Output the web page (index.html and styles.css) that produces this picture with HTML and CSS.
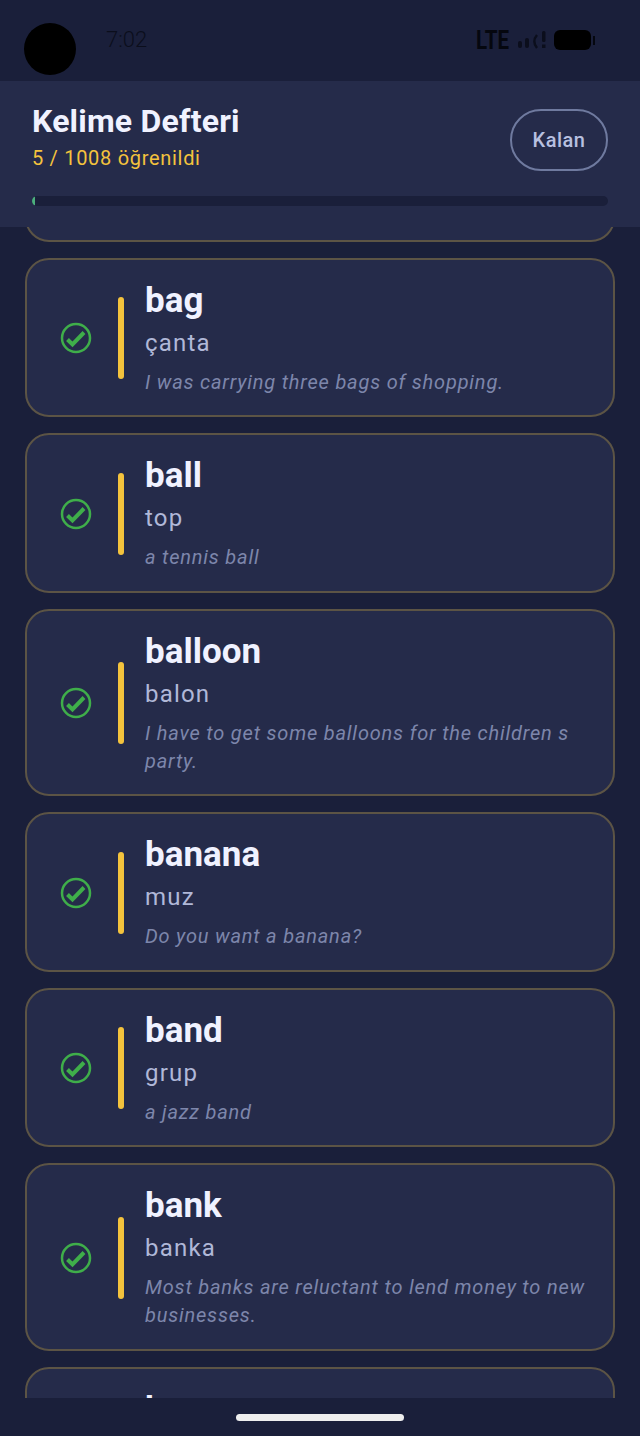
FILE: index.html
```html
<!DOCTYPE html>
<html lang="tr">

<head>
    <meta charset="UTF-8">
    <meta name="viewport" content="width=device-width, initial-scale=1.0">
    <title>Kelime Defteri</title>
    <link rel="stylesheet" href="styles.css">
</head>

<body>
    <div class="statusbar">
        <div class="camera"></div>
        <span class="time">7:02</span>
        <div class="status-icons">
            <span class="lte">LTE</span>
            <svg class="signal" width="30" height="20" viewBox="0 0 30 20">
                <rect x="1" y="11" width="4" height="7" rx="2" fill="#0b0e1c" />
                <rect x="8" y="8" width="4" height="10" rx="2" fill="#0b0e1c" />
                <path d="M20 5C16.500 9 16.500 14 20 18" stroke="#0b0e1c" stroke-width="2.500" fill="none" />
                <rect x="25" y="1" width="3.500" height="11" rx="1.500" fill="#0b0e1c" />
                <rect x="25" y="14.500" width="3.500" height="3.500" fill="#0b0e1c" />
            </svg>
            <div class="battery"></div>
            <div class="battery-tip"></div>
        </div>
    </div>

    <header class="header">
        <div class="header-top">
            <div>
                <h1>Kelime Defteri</h1>
                <p class="count">5 / 1008 öğrenildi</p>
            </div>
            <button class="filter">Kalan</button>
        </div>
        <div class="progress">
            <div class="progress-fill" style="width: 0.5%"></div>
        </div>
    </header>

    <main class="list">
        <div class="list-inner">
            <!-- onceki kart, yarisi header altinda -->
            <article class="card card-hidden"></article>
            <article class="card">
                <svg class="check" width="32" height="32" viewBox="0 0 32 32"><circle cx="16" cy="16" r="14" /><path d="M7.500 17.500L12.500 22.500L24 10.500" /></svg>
                <div class="bar"></div>
                <div class="words">
                    <h2>bag</h2>
                    <p class="tr">çanta</p>
                    <p class="ex">I was carrying three bags of shopping.</p>
                </div>
            </article>
            <article class="card">
                <svg class="check" width="32" height="32" viewBox="0 0 32 32"><circle cx="16" cy="16" r="14" /><path d="M7.500 17.500L12.500 22.500L24 10.500" /></svg>
                <div class="bar"></div>
                <div class="words">
                    <h2>ball</h2>
                    <p class="tr">top</p>
                    <p class="ex">a tennis ball</p>
                </div>
            </article>
            <article class="card">
                <svg class="check" width="32" height="32" viewBox="0 0 32 32"><circle cx="16" cy="16" r="14" /><path d="M7.500 17.500L12.500 22.500L24 10.500" /></svg>
                <div class="bar"></div>
                <div class="words">
                    <h2>balloon</h2>
                    <p class="tr">balon</p>
                    <p class="ex">I have to get some balloons for the children s party.</p>
                </div>
            </article>
            <article class="card">
                <svg class="check" width="32" height="32" viewBox="0 0 32 32"><circle cx="16" cy="16" r="14" /><path d="M7.500 17.500L12.500 22.500L24 10.500" /></svg>
                <div class="bar"></div>
                <div class="words">
                    <h2>banana</h2>
                    <p class="tr">muz</p>
                    <p class="ex">Do you want a banana?</p>
                </div>
            </article>
            <article class="card">
                <svg class="check" width="32" height="32" viewBox="0 0 32 32"><circle cx="16" cy="16" r="14" /><path d="M7.500 17.500L12.500 22.500L24 10.500" /></svg>
                <div class="bar"></div>
                <div class="words">
                    <h2>band</h2>
                    <p class="tr">grup</p>
                    <p class="ex">a jazz band</p>
                </div>
            </article>
            <article class="card">
                <svg class="check" width="32" height="32" viewBox="0 0 32 32"><circle cx="16" cy="16" r="14" /><path d="M7.500 17.500L12.500 22.500L24 10.500" /></svg>
                <div class="bar"></div>
                <div class="words">
                    <h2>bank</h2>
                    <p class="tr">banka</p>
                    <p class="ex">Most banks are reluctant to lend money to new businesses.</p>
                </div>
            </article>
            <!-- son kart, alt barda kesiliyor -->
            <article class="card card-cut">
                <div class="words">
                    <h2>b</h2>
                </div>
            </article>
        </div>
    </main>

    <div class="homebar">
        <div class="home-pill"></div>
    </div>
</body>

</html>
```

FILE: styles.css
```css
* {
    box-sizing: border-box;
    font-family: "Roboto", sans-serif;
}

html,
body {
    margin: 0;
    height: 100%;
}

body {
    display: flex;
    flex-direction: column;
    height: 1436px;
    overflow: hidden;
    background-color: #1a1f3a;
}

/* status bar */
.statusbar {
    display: flex;
    align-items: flex-start;
    height: 81px;
    flex-shrink: 0;
    padding: 23px 45px 0 24px;
    background-color: #1a1f3a;
}

.camera {
    width: 52px;
    height: 52px;
    border-radius: 50%;
    background-color: #000;
}

.time {
    margin: 4px 0 0 30px;
    font-size: 22px;
    line-height: 26px;
    font-weight: 300;
    color: #0b0e1c;
}

.status-icons {
    display: flex;
    align-items: center;
    height: 34px;
    margin-left: auto;
}

.lte {
    width: 38px;
    font-size: 25px;
    font-weight: 700;
    color: #05070f;
    transform: scaleX(0.82);
    transform-origin: left center;
}

.signal {
    margin: 0 7px 0 3px;
}

.battery {
    width: 37px;
    height: 20px;
    border-radius: 6px;
    background-color: #000;
}

.battery-tip {
    width: 2px;
    height: 9px;
    margin-left: 2px;
    background-color: #05070f;
}

/* header */
.header {
    flex-shrink: 0;
    height: 146px;
    padding: 22px 32px 0;
    background-color: #252b4a;
}

.header-top {
    display: flex;
    justify-content: space-between;
    align-items: flex-start;
}

h1 {
    margin: 0;
    font-size: 32px;
    line-height: 36px;
    font-weight: 700;
    letter-spacing: 0.2px;
    color: #f0f2ff;
}

.count {
    margin: 6px 0 0;
    font-size: 20px;
    line-height: 26px;
    letter-spacing: 0.7px;
    color: #f4c33d;
}

.filter {
    width: 98px;
    height: 62px;
    margin-top: 6px;
    padding: 0;
    border: 2px solid #6f7a9f;
    border-radius: 31px;
    background-color: transparent;
    font-size: 20px;
    font-weight: 500;
    letter-spacing: 0.5px;
    color: #b8c0e0;
}

.progress {
    height: 10px;
    margin-top: 25px;
    border-radius: 5px;
    overflow: hidden;
    background-color: #1a1f3a;
}

.progress-fill {
    height: 100%;
    border-radius: 5px;
    background-color: #4caf7d;
}

/* kart listesi */
.list {
    flex: 1;
    min-height: 0;
    overflow: hidden;
    padding: 0 25px;
}

.list-inner {
    display: flex;
    flex-direction: column;
    gap: 16px;
    margin-top: -145px;
}

.card {
    display: flex;
    align-items: center;
    flex-shrink: 0;
    padding: 21px 20px 19.500px 32.500px;
    border: 2px solid #5c5445;
    border-radius: 24px;
    background-color: #252b4a;
}

.card-hidden {
    height: 159.500px;
}

.card-cut {
    height: 159.500px;
    align-items: flex-start;
    padding-left: 118px;
}

.check {
    flex-shrink: 0;
    fill: none;
    stroke: #3fae4a;
}

.check circle {
    stroke-width: 2.500;
}

.check path {
    stroke-width: 4;
}

.bar {
    flex-shrink: 0;
    width: 6px;
    height: 82px;
    margin: 0 21px 0 26.500px;
    border-radius: 3px;
    background-color: #f4c33d;
}

.words {
    min-width: 0;
}

h2 {
    margin: 0;
    font-size: 35px;
    line-height: 40px;
    font-weight: 700;
    color: #f0f2ff;
}

.tr {
    margin: 6px 0 0;
    font-size: 24px;
    line-height: 32px;
    letter-spacing: 1.2px;
    color: #b0b8d8;
}

.ex {
    margin: 9px 0 0;
    font-size: 20px;
    line-height: 28px;
    letter-spacing: 0.8px;
    font-style: italic;
    color: #7d86ab;
}

/* alt bar */
.homebar {
    display: flex;
    justify-content: center;
    flex-shrink: 0;
    height: 38px;
    padding-top: 16px;
    background-color: #1a1f3a;
}

.home-pill {
    width: 168px;
    height: 7px;
    border-radius: 4px;
    background-color: #eeeeee;
}
```
